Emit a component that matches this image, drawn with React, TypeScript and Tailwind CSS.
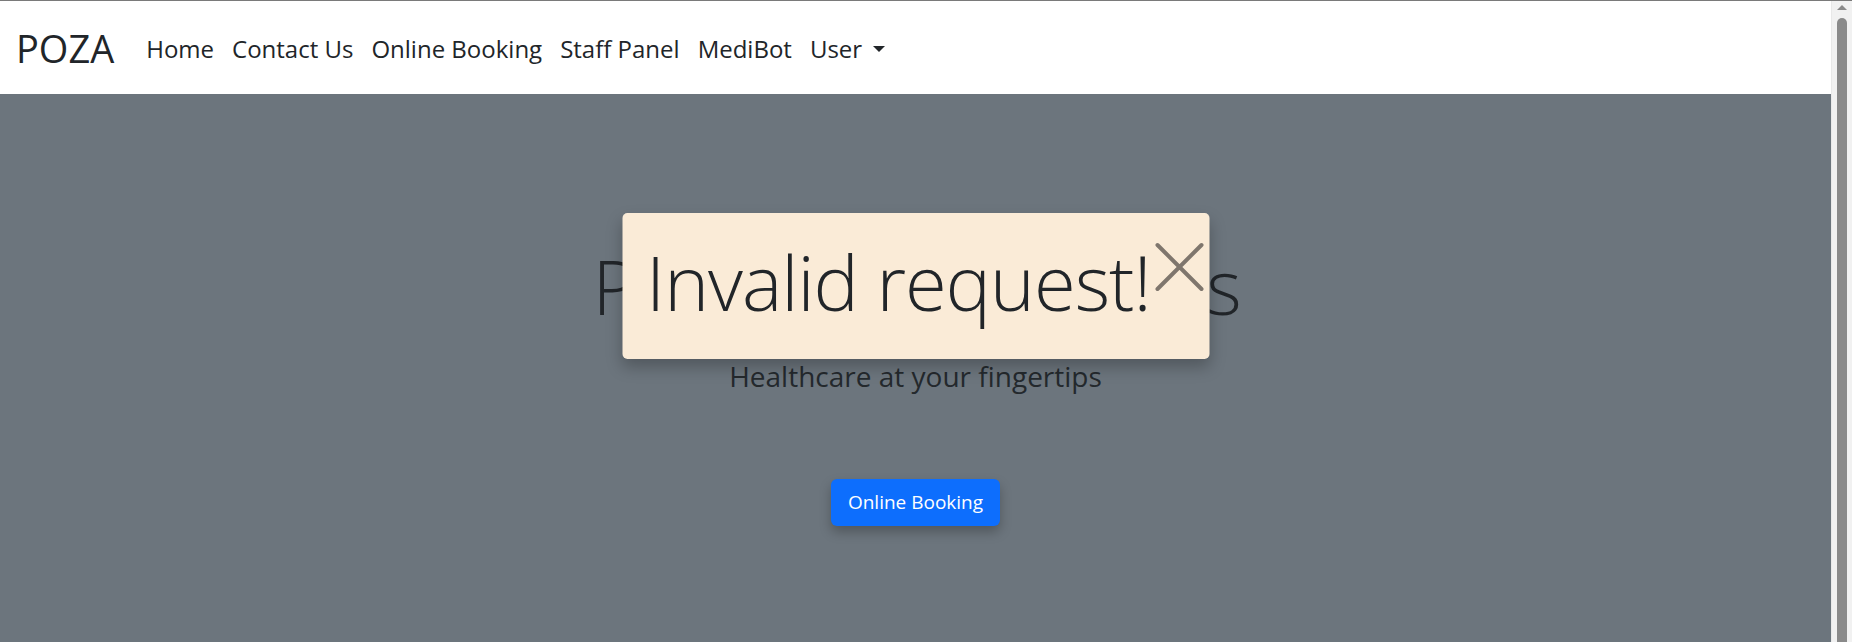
const navItems = ['Home', 'Contact Us', 'Online Booking', 'Staff Panel', 'MediBot'];

function Navbar() {
  return (
    <nav className="flex h-[93px] items-center bg-white pl-[16px] shadow-[0_1px_3px_rgba(0,0,0,0.15)]">
      <a className="mr-[23px] text-[38px] leading-none text-[#212529]">POZA</a>
      <ul className="flex items-center pt-[2px]">
        {navItems.map((item) => (
          <li key={item} className="px-[9px] text-[24px] leading-none text-[#212529]">
            {item}
          </li>
        ))}
        <li className="flex items-center gap-[11px] px-[9px] text-[24px] leading-none text-[#212529]">
          User
          <span className="h-0 w-0 border-x-[6px] border-t-[6px] border-x-transparent border-t-[#212529]" />
        </li>
      </ul>
    </nav>
  );
}

function CloseIcon() {
  return (
    <svg width="52" height="52" viewBox="0 0 52 52" fill="none" stroke="#7f766d" strokeWidth="4" strokeLinecap="round">
      <path d="M4 4 L48 48 M48 4 L4 48" />
    </svg>
  );
}

function Toast() {
  return (
    <div className="absolute left-1/2 top-[119px] flex h-[146px] w-[587px] -translate-x-1/2 items-start justify-between rounded-[5px] bg-[#faebd7] pl-[24px] pr-[4px] shadow-[0_8px_16px_rgba(0,0,0,0.25)]">
      <p className="whitespace-nowrap pt-[31px] text-[76px] font-light leading-none tracking-[-1px] text-[#212529]">Invalid request!</p>
      <button className="mt-[28px]">
        <CloseIcon />
      </button>
    </div>
  );
}

function Scrollbar() {
  return (
    <div className="flex w-[21px] flex-col items-center border-l border-[#e8e8e8] bg-[#f1f1f1] pt-[4px]">
      <span className="h-0 w-0 border-x-[5px] border-b-[5px] border-x-transparent border-b-[#8a8a8a]" />
      <div className="mt-[8px] w-[10px] flex-1 rounded-t-full bg-[#8a8a8a]" />
    </div>
  );
}

export default function App() {
  return (
    <div className="flex h-[642px] overflow-hidden border-t border-[#7a7a7a] font-['Open_Sans',sans-serif]">
      <div className="flex flex-1 flex-col">
        <Navbar />
        <main className="relative flex flex-1 flex-col items-center bg-[#6c757d] pt-[154px]">
          <h1 className="whitespace-nowrap text-[76px] font-light leading-none tracking-[-3px] text-[#212529]">Poza Health Services</h1>
          <p className="mt-[38px] text-[28px] leading-none text-[#24292d]">Healthcare at your fingertips</p>
          <button className="mt-[89px] h-[47px] rounded-[6px] bg-[#0d6efd] px-[17px] text-[19px] text-white shadow-[0_6px_12px_rgba(0,0,0,0.25)]">
            Online Booking
          </button>
          <Toast />
        </main>
      </div>
      <Scrollbar />
    </div>
  );
}
